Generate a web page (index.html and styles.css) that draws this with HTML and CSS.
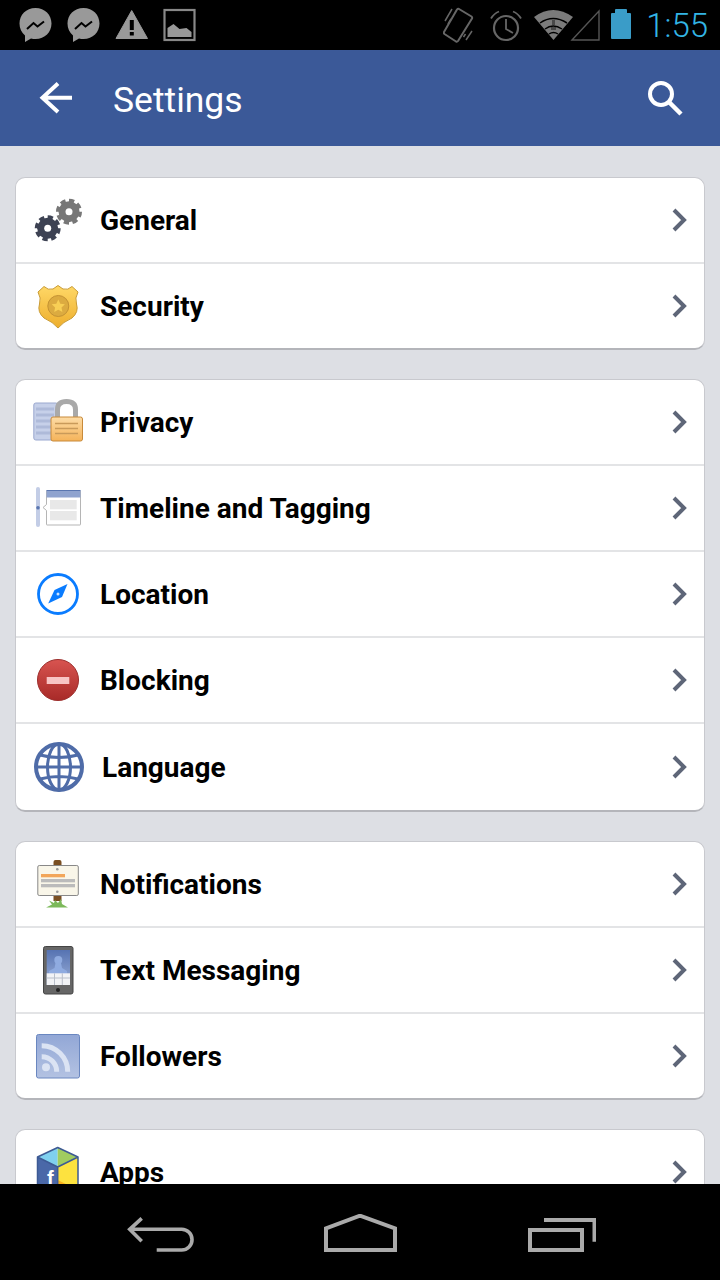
FILE: index.html
```html
<!DOCTYPE html>
<html lang="en">
<head>
  <meta charset="UTF-8">
  <meta name="viewport" content="width=device-width, initial-scale=1.0">
  <title>Settings</title>
  <link rel="stylesheet" href="styles.css">
</head>
<body>
  <div class="status-bar">
    <div class="notify-icons">
      <svg width="33" height="34" viewBox="19 8 33 34"><path fill="#999" d="M35.5 8C26 8 19.5 15 19.5 23.5c0 5 2 9 5.5 12V42l6-3.500c1.500.5 3 .5 4.500.5 9.500 0 16-7 16-15.500S45 8 35.500 8z"/><path fill="none" stroke="#000" stroke-width="2" d="M27 29l6.500-6 4 3.500 6.500-5"/></svg>
      <svg width="33" height="34" viewBox="19 8 33 34"><path fill="#999" d="M35.5 8C26 8 19.5 15 19.5 23.5c0 5 2 9 5.5 12V42l6-3.500c1.500.5 3 .5 4.500.5 9.500 0 16-7 16-15.500S45 8 35.500 8z"/><path fill="none" stroke="#000" stroke-width="2" d="M27 29l6.500-6 4 3.500 6.500-5"/></svg>
      <svg width="33" height="34" viewBox="115 8 33 34"><path fill="#999" stroke="#999" stroke-linejoin="round" d="M131.700 10.500L116 38.500h31.500z"/><rect x="129.800" y="20" width="4" height="10"/><rect x="129.800" y="32" width="4" height="3.500"/></svg>
      <svg width="33" height="34" viewBox="163.500 8 33 34"><rect x="165" y="10" width="30" height="30" fill="none" stroke="#888" stroke-width="2.200"/><path fill="#999" d="M168 37v-9l6-4 6 5 7-1 5 4v5z"/></svg>
    </div>
    <div class="system-icons">
      <svg width="190" height="50" viewBox="444 0 190 50">
        <g fill="none" stroke="#666" stroke-width="2">
          <path stroke-linejoin="round" d="M460 9l12.500 7.500q1 .8.500 2L459 41q-.8 1-2 .5L445.500 34q-1-.8-.500-2L458 9.500q.8-1 2-.5z"/>
          <path stroke-width="1.500" d="M446 21l7-12M449 24l3-5M467 40l6-9M464.500 37l2-3"/>
          <circle cx="507" cy="28" r="12" stroke-width="2.200"/>
          <path stroke-width="1.800" d="M507 19v10l7 4M492 18.500q3-5 8-7M514 11.500q5 2 8 7"/>
          <path stroke="#555" stroke-width="1.400" d="M573 40l27-29v29z"/>
        </g>
        <path fill="#7b7b7b" d="M535 17q19-14 39 0l-19.500 23z"/>
        <path fill="none" stroke="#000" stroke-width="1.500" d="M541 23q13-9 27 0M546 29q8-6 17 0M550 34q4.500-3 9 0"/>
        <path fill="#000" d="M553 20h3v5h-3zM552 27h5v3h-5z" opacity=".4"/>
        <path fill="#3a9cc8" d="M616 13v-3q0-1 1-1h10q1 0 1 1v3h3q1 0 1 1v24q0 1-1 1h-18q-1 0-1-1V14q0-1 1-1z"/>
      </svg>
      <span class="clock">1:55</span>
    </div>
  </div>

  <div class="action-bar">
    <svg class="back-arrow" width="36" height="36" viewBox="38 80 36 36"><path fill="none" stroke="#fff" stroke-width="4" d="M72 97.700H42M58 83.500L42.500 97.700 58 112"/></svg>
    <div class="page-title">Settings</div>
    <svg class="search-icon" width="36" height="36" viewBox="646 80 36 36"><circle cx="660" cy="94" r="11" fill="none" stroke="#fff" stroke-width="4"/><path stroke="#fff" stroke-width="4.500" d="M668 102l12 12"/></svg>
  </div>

  <div class="settings-list">
    <div class="card">
      <div class="row">
        <svg class="row-icon" width="84" height="84" viewBox="0 0 84 84">
          <circle cx="53" cy="33.700" r="10.500" fill="#777"/>
          <circle cx="53" cy="33.700" r="11" fill="none" stroke="#777" stroke-width="4" pathLength="8" stroke-dasharray=".6 .4"/>
          <circle cx="53" cy="33.700" r="3.500" fill="#fff"/>
          <circle cx="31.700" cy="50.300" r="10.500" fill="#3d4253"/>
          <circle cx="31.700" cy="50.300" r="11" fill="none" stroke="#3d4253" stroke-width="4" pathLength="8" stroke-dasharray=".6 .4"/>
          <circle cx="31.700" cy="50.300" r="3.500" fill="#fff"/>
        </svg>
        <span class="row-label">General</span>
        <svg class="chevron" width="18" height="26" viewBox="0 0 18 26"><path fill="none" stroke="#5e6678" stroke-width="4" d="M4 3l10 10L4 23"/></svg>
      </div>
      <div class="row">
        <svg class="row-icon" width="84" height="84" viewBox="0 0 84 84">
          <defs><linearGradient id="badge" x1="0" y1="0" x2="0" y2="1"><stop offset="0" stop-color="#ffd867"/><stop offset="1" stop-color="#edae2d"/></linearGradient></defs>
          <path fill="url(#badge)" stroke="#c99b35" d="M42 21.500l5 3.500q5 1.500 9-2.500l6 5.500q-3.500 6-1.500 12 2.500 8-4.500 14-9 4-14 10-5-6-14-10-7-6-4.500-14 2-6-1.500-12l6-5.500q4 4 9 2.500z"/>
          <circle cx="42.300" cy="42" r="10.500" fill="#dcab40" stroke="#c49233"/>
          <path fill="#f8cf55" d="M42.300 35.500l2 4.300 4.600.5-3.400 3.100.9 4.600-4.100-2.300-4.100 2.300.9-4.600-3.400-3.100 4.600-.5z"/>
        </svg>
        <span class="row-label">Security</span>
        <svg class="chevron" width="18" height="26" viewBox="0 0 18 26"><path fill="none" stroke="#5e6678" stroke-width="4" d="M4 3l10 10L4 23"/></svg>
      </div>
    </div>

    <div class="card">
      <div class="row">
        <svg class="row-icon" width="84" height="84" viewBox="0 0 84 84">
          <defs><linearGradient id="lock" x1="0" y1="0" x2="0" y2="1"><stop offset="0" stop-color="#fddca6"/><stop offset="1" stop-color="#f5b35a"/></linearGradient></defs>
          <rect x="17.800" y="23" width="24" height="37" rx="2" fill="#c6d0e9" stroke="#9aa8cf"/>
          <path stroke="#aebad9" stroke-width="3" d="M20 29h18M20 35h18M20 41h18M20 47h18M20 53h15"/>
          <path fill="none" stroke="#a9a9a9" stroke-width="5" d="M41.500 38V29.500q0-8 9-8t9 8V38"/>
          <rect x="35" y="37" width="31.500" height="24" rx="2" fill="url(#lock)" stroke="#c88a3a"/>
          <path stroke="#c99a5a" stroke-width="1.500" d="M39 43.500h23M39 48.500h23M39 53.500h23"/>
        </svg>
        <span class="row-label">Privacy</span>
        <svg class="chevron" width="18" height="26" viewBox="0 0 18 26"><path fill="none" stroke="#5e6678" stroke-width="4" d="M4 3l10 10L4 23"/></svg>
      </div>
      <div class="row">
        <svg class="row-icon" width="84" height="84" viewBox="0 0 84 84">
          <rect x="20" y="21" width="4" height="40" rx="2" fill="#c3cde6"/>
          <circle cx="22" cy="41.700" r="1.800" fill="#5a76b0"/>
          <path fill="#fff" stroke="#b5b5b5" d="M30.500 25h34v33.500q0 .5-.5.500H31q-.5 0-.5-.5V44.500l-3.500-3 3.500-3z"/>
          <rect x="30.500" y="24.500" width="34" height="7" fill="#8fa3cf"/>
          <path stroke="#5a76b0" d="M30.500 24.500h34"/>
          <rect x="34" y="34" width="26.700" height="9.300" fill="#e8e8e8"/>
          <rect x="34" y="45" width="26.700" height="9.300" fill="#e8e8e8"/>
        </svg>
        <span class="row-label">Timeline and Tagging</span>
        <svg class="chevron" width="18" height="26" viewBox="0 0 18 26"><path fill="none" stroke="#5e6678" stroke-width="4" d="M4 3l10 10L4 23"/></svg>
      </div>
      <div class="row">
        <svg class="row-icon" width="84" height="84" viewBox="0 0 84 84">
          <circle cx="42" cy="42" r="19.500" fill="none" stroke="#0a7cff" stroke-width="2.800"/>
          <path fill="#0a7cff" d="M51.500 32l-5.500 13-13.800 6.500L38.500 38z"/>
          <circle cx="42" cy="42" r="1.500" fill="#cfe4ff"/>
        </svg>
        <span class="row-label">Location</span>
        <svg class="chevron" width="18" height="26" viewBox="0 0 18 26"><path fill="none" stroke="#5e6678" stroke-width="4" d="M4 3l10 10L4 23"/></svg>
      </div>
      <div class="row">
        <svg class="row-icon" width="84" height="84" viewBox="0 0 84 84">
          <defs><linearGradient id="block" x1="0" y1="0" x2="0" y2="1"><stop offset="0" stop-color="#d85450"/><stop offset="1" stop-color="#a82a28"/></linearGradient></defs>
          <circle cx="42" cy="42" r="20.500" fill="url(#block)" stroke="#9c2e2c"/>
          <rect x="30.700" y="39" width="22.600" height="7" fill="#f8c4c4"/>
        </svg>
        <span class="row-label">Blocking</span>
        <svg class="chevron" width="18" height="26" viewBox="0 0 18 26"><path fill="none" stroke="#5e6678" stroke-width="4" d="M4 3l10 10L4 23"/></svg>
      </div>
      <div class="row">
        <svg class="row-icon" width="86" height="86" viewBox="0 0 86 86">
          <g fill="none" stroke="#4f6ca8">
            <circle cx="43" cy="43" r="23" stroke-width="4"/>
            <ellipse cx="43" cy="43" rx="11.500" ry="23" stroke-width="3"/>
            <path stroke-width="3" d="M43 20v46M20 43h46M24 31q19 5 38 0M24 55q19-5 38 0"/>
          </g>
        </svg>
        <span class="row-label">Language</span>
        <svg class="chevron" width="18" height="26" viewBox="0 0 18 26"><path fill="none" stroke="#5e6678" stroke-width="4" d="M4 3l10 10L4 23"/></svg>
      </div>
    </div>

    <div class="card">
      <div class="row">
        <svg class="row-icon" width="84" height="84" viewBox="0 0 84 84">
          <path fill="#7a4f22" d="M37.500 20q0-2 2-2h4q2 0 2 2v39h-8z"/>
          <path fill="#7cb95a" d="M30 65.500l6-3-3-4 5 2.500 1-3 3 3 3-4 1 5 6 3.500z"/>
          <rect x="21.800" y="23.500" width="40.500" height="30" rx="1.500" fill="#f9f6e9" stroke="#888"/>
          <rect x="25" y="32" width="24" height="3.300" fill="#f2a65a"/>
          <rect x="25" y="37" width="34" height="3.300" fill="#bbb"/>
          <rect x="25" y="42" width="34" height="3.300" fill="#bbb"/>
          <circle cx="41.300" cy="27.300" r="1.300" fill="#999"/>
          <circle cx="41.300" cy="49.700" r="1.300" fill="#999"/>
        </svg>
        <span class="row-label">Notifications</span>
        <svg class="chevron" width="18" height="26" viewBox="0 0 18 26"><path fill="none" stroke="#5e6678" stroke-width="4" d="M4 3l10 10L4 23"/></svg>
      </div>
      <div class="row">
        <svg class="row-icon" width="84" height="84" viewBox="0 0 84 84">
          <defs><linearGradient id="screen" x1="0" y1="0" x2="0" y2="1"><stop offset="0" stop-color="#5673b2"/><stop offset="1" stop-color="#9cb0d8"/></linearGradient></defs>
          <rect x="27.500" y="18.500" width="29.500" height="47.500" rx="2" fill="#666" stroke="#444"/>
          <rect x="30.700" y="22" width="23.300" height="35" fill="url(#screen)"/>
          <circle cx="42.300" cy="32" r="4" fill="#8fabe0"/>
          <path fill="#8fabe0" d="M39.500 35h5.500l1 5 5 3v3H33v-3l5.500-3z"/>
          <rect x="30.700" y="45.300" width="23.300" height="11.700" fill="#f2f3f6"/>
          <path stroke="#b9bfca" d="M38.500 45.300V57M46.300 45.300V57M30.700 50h23.300"/>
          <circle cx="42" cy="62" r="2" fill="#222"/>
        </svg>
        <span class="row-label">Text Messaging</span>
        <svg class="chevron" width="18" height="26" viewBox="0 0 18 26"><path fill="none" stroke="#5e6678" stroke-width="4" d="M4 3l10 10L4 23"/></svg>
      </div>
      <div class="row">
        <svg class="row-icon" width="84" height="84" viewBox="0 0 84 84">
          <defs><linearGradient id="rss" x1="0" y1="0" x2="0" y2="1"><stop offset="0" stop-color="#92a7d6"/><stop offset="1" stop-color="#b3c2e2"/></linearGradient></defs>
          <rect x="20.500" y="20.500" width="43" height="43.500" rx="2" fill="url(#rss)" stroke="#6a87c0"/>
          <circle cx="30" cy="53.300" r="4" fill="#dbe3f3"/>
          <path fill="none" stroke="#dbe3f3" stroke-width="5" d="M25.700 31.700a26 26 0 0 1 26 26M25.700 42.700a15 15 0 0 1 15 15"/>
        </svg>
        <span class="row-label">Followers</span>
        <svg class="chevron" width="18" height="26" viewBox="0 0 18 26"><path fill="none" stroke="#5e6678" stroke-width="4" d="M4 3l10 10L4 23"/></svg>
      </div>
    </div>

    <div class="card">
      <div class="row">
        <svg class="row-icon" width="84" height="84" viewBox="0 0 84 84">
          <path fill="#7fd0ef" d="M41.700 17.500L21.500 27l20.200 10z"/>
          <path fill="#a0cc60" d="M41.700 17.500L62 27 41.700 37z"/>
          <path fill="#4a68a8" d="M21.500 27l20.200 10v33l-20.200-10z"/>
          <path fill="#fde23f" d="M62 27L41.700 37v33L62 60z"/>
          <path fill="#f9b11c" d="M41.700 50L62 60 41.700 70z"/>
          <path fill="none" stroke="#3d5a94" stroke-width="1.500" stroke-linejoin="round" d="M41.700 17.500L62 27v33L41.700 70 21.500 60V27zM21.500 27l20.200 10L62 27M41.700 37v33"/>
          <text class="apps-f" x="31" y="55">f</text>
        </svg>
        <span class="row-label">Apps</span>
        <svg class="chevron" width="18" height="26" viewBox="0 0 18 26"><path fill="none" stroke="#5e6678" stroke-width="4" d="M4 3l10 10L4 23"/></svg>
      </div>
    </div>
  </div>

  <div class="nav-bar">
    <svg width="70" height="40" viewBox="124 1214 70 40"><path fill="none" stroke="#aaa" stroke-width="3.600" d="M141.700 1218.300l-12 11 12 12M130 1229.300h51.700a10.350 10.350 0 0 1 0 20.700h-25"/></svg>
    <svg width="76" height="40" viewBox="322 1214 76 40"><path fill="none" stroke="#aaa" stroke-width="4" d="M326 1250v-21.700l34-12.600 35 12.600v21.700z"/></svg>
    <svg width="70" height="40" viewBox="526 1214 70 40"><path fill="none" stroke="#aaa" stroke-width="4" d="M530 1230h52v20h-52zM544 1220h50.500v21.700"/></svg>
  </div>
</body>
</html>
```

FILE: styles.css
```css
body {
  display: flex;
  flex-direction: column;
  width: 720px;
  height: 1280px;
  margin: 0;
  overflow: hidden;
  background-color: #dddfe4;
  font-family: Roboto, Arial, sans-serif;
}

svg {
  display: block;
  flex: none;
}

.status-bar {
  display: flex;
  justify-content: space-between;
  align-items: center;
  flex: none;
  height: 50px;
  padding: 0 12px 0 19px;
  background-color: #000;
}

.notify-icons {
  display: flex;
  gap: 15px;
}

.system-icons {
  display: flex;
  align-items: center;
  gap: 13px;
}

.clock {
  color: #33b5e5;
  font-size: 33px;
  font-weight: 300;
}

.action-bar {
  display: flex;
  align-items: center;
  flex: none;
  height: 96px;
  padding: 0 37px 0 38px;
  background-color: #3b5998;
}

.back-arrow {
  margin-right: 39px;
}

.page-title {
  flex: 1;
  padding-top: 3px;
  color: #fff;
  font-size: 35.5px;
}

.settings-list {
  display: flex;
  flex-direction: column;
  gap: 29px;
  flex: 1;
  min-height: 0;
  padding: 31px 15px 0;
  overflow: hidden;
}

.card {
  flex: none;
  border: 1px solid #c8c9ce;
  border-bottom: 2px solid #b4b5ba;
  border-radius: 10px;
  background-color: #fff;
}

.row {
  display: flex;
  align-items: center;
  padding-right: 16px;
}

.row + .row {
  border-top: 2px solid #e3e4e6;
}

.row-label {
  flex: 1;
  color: #000;
  font-size: 28px;
  font-weight: 700;
}

.apps-f {
  fill: #fff;
  font-family: "Liberation Sans", sans-serif;
  font-size: 20px;
  font-weight: 700;
}

.nav-bar {
  display: flex;
  justify-content: center;
  gap: 128px;
  flex: none;
  height: 96px;
  padding-top: 30px;
  box-sizing: border-box;
  background-color: #000;
}
```
